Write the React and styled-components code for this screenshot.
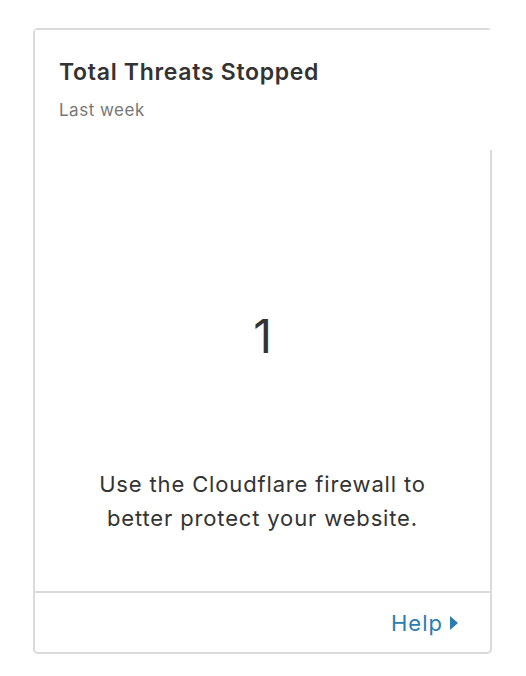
import React from 'react'
import styled, { createGlobalStyle } from 'styled-components'

const GlobalStyle = createGlobalStyle`
    body {
        margin: 0;
        background: #ffffff;
        font-family: Inter, "Liberation Sans", Arial, sans-serif;
    }
`

const Page = styled.div`
    padding: 28px 34px 22px 33px;
`

const Card = styled.div`
    display: flex;
    flex-direction: column;
    width: 459px;
    height: 626px;
    box-sizing: border-box;
    border: 2px solid #dadada;
    border-radius: 5px;
    background: #ffffff;
`

const Header = styled.div`
    position: relative;
    height: 120px;
    box-sizing: border-box;
    margin-right: -4px;
    padding: 26px 24px 0;
    background: #ffffff;
`

const Title = styled.h2`
    margin: 0;
    font-size: 23px;
    line-height: 32px;
    font-weight: 600;
    letter-spacing: 0.7px;
    color: #333333;
`

const Subtitle = styled.div`
    margin-top: 11px;
    font-size: 17px;
    line-height: 22px;
    letter-spacing: 0.5px;
    color: #777777;
`

const Body = styled.div`
    flex: 1;
    display: flex;
    flex-direction: column;
    align-items: center;
    padding: 158px 10px 0;
`

const Value = styled.div`
    font-size: 46px;
    line-height: 56px;
    font-weight: 400;
    color: #333333;
`

const Description = styled.p`
    margin: 103px 0 0;
    font-size: 22px;
    line-height: 34px;
    letter-spacing: 0.85px;
    text-align: center;
    color: #333333;
`

const Footer = styled.div`
    display: flex;
    justify-content: flex-end;
    align-items: center;
    height: 59px;
    border-top: 2px solid #dadada;
    padding-right: 32px;
`

const HelpLink = styled.a`
    display: flex;
    align-items: center;
    gap: 7px;
    font-size: 22px;
    letter-spacing: 1px;
    color: #2c7cb3;
    text-decoration: none;
    cursor: pointer;
`

const ThreatsCard = () => {
    return (
        <Card>
            <Header>
                <Title>Total Threats Stopped</Title>
                <Subtitle>Last week</Subtitle>
            </Header>
            <Body>
                <Value>1</Value>
                <Description>
                    Use the Cloudflare firewall to<br />
                    better protect your website.
                </Description>
            </Body>
            <Footer>
                <HelpLink>
                    Help
                    <svg width="8" height="14" viewBox="0 0 8 14">
                        <polygon points="0,0 8,7 0,14" fill="#2c7cb3" />
                    </svg>
                </HelpLink>
            </Footer>
        </Card>
    )
}

const App = () => (
    <Page>
        <GlobalStyle />
        <ThreatsCard />
    </Page>
)

export default App
